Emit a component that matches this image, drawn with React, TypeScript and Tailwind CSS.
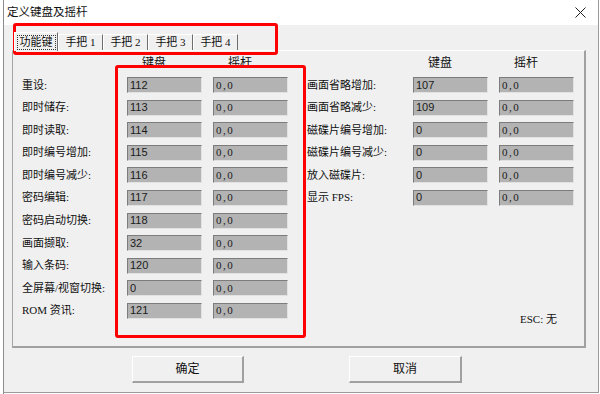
import React from "react";

type Row = { label: string; key: string; pad: string };

const LEFT_ROWS: Row[] = [
  { label: "重设:", key: "112", pad: "0,0" },
  { label: "即时储存:", key: "113", pad: "0,0" },
  { label: "即时读取:", key: "114", pad: "0,0" },
  { label: "即时编号增加:", key: "115", pad: "0,0" },
  { label: "即时编号减少:", key: "116", pad: "0,0" },
  { label: "密码编辑:", key: "117", pad: "0,0" },
  { label: "密码启动切换:", key: "118", pad: "0,0" },
  { label: "画面撷取:", key: "32", pad: "0,0" },
  { label: "输入条码:", key: "120", pad: "0,0" },
  { label: "全屏幕/视窗切换:", key: "0", pad: "0,0" },
  { label: "ROM 资讯:", key: "121", pad: "0,0" },
];

const RIGHT_ROWS: Row[] = [
  { label: "画面省略增加:", key: "107", pad: "0,0" },
  { label: "画面省略减少:", key: "109", pad: "0,0" },
  { label: "磁碟片编号增加:", key: "0", pad: "0,0" },
  { label: "磁碟片编号减少:", key: "0", pad: "0,0" },
  { label: "放入磁碟片:", key: "0", pad: "0,0" },
  { label: "显示 FPS:", key: "0", pad: "0,0" },
];

const TABS = ["功能键", "手把 1", "手把 2", "手把 3", "手把 4"];

function Field({ value, mono }: { value: string; mono?: boolean }) {
  return (
    <div
      className={`flex h-[16px] w-[75px] items-center border border-t-[#7c7c7c] border-l-[#7c7c7c] border-r-[#e2e2e2] border-b-[#e2e2e2] bg-[#b3b3b3] pl-[2px] text-[11px] leading-none text-[#1a1a1a] ${
        mono ? "font-['Liberation_Serif',serif] tracking-[1.5px]" : "font-['Liberation_Sans',sans-serif]"
      }`}
    >
      {value}
    </div>
  );
}

function Half({ rows, labelWidth, esc }: { rows: Row[]; labelWidth: string; esc?: boolean }) {
  return (
    <div className="flex h-[270px] flex-col">
      <div className="flex h-[14px] items-center text-[12px] leading-none">
        <div className={labelWidth} />
        <div className="w-[75px] pl-[15px]">键盘</div>
        <div className="w-[11px]" />
        <div className="w-[75px] pl-[15px]">摇杆</div>
      </div>
      <div className="mt-[7px] flex flex-col">
        {rows.map((row) => (
          <div key={row.label} className="flex h-[22.6px] items-start">
            <div className={`flex h-[16px] items-center text-[11px] leading-none ${labelWidth}`}>{row.label}</div>
            <Field value={row.key} />
            <div className="w-[11px]" />
            <Field value={row.pad} mono />
          </div>
        ))}
      </div>
      {esc && (
        <div className="mt-auto flex justify-end pr-[17px] text-[11px] leading-[14px]">ESC: 无</div>
      )}
    </div>
  );
}

export default function App() {
  return (
    <div className="relative flex h-[394px] w-[600px] overflow-hidden bg-white font-['Liberation_Serif','Noto_Sans_CJK_SC',serif] text-[#111]">
      <div className="h-full w-[4px] border-r border-[#8c8c8c] bg-white" />

      <div className="flex h-[393px] w-[595px] flex-col border-r border-b border-[#9a9a9a] bg-[#f0f0f0]">
        <div className="flex h-[25px] items-center justify-between bg-white pl-[3px] pr-[7px]">
          <span className="text-[11.5px] leading-none">定义键盘及摇杆</span>
          <svg width="11" height="11" viewBox="0 0 11 11" className="mr-[5px]">
            <path d="M0.5 0.5 L10.5 10.5 M10.5 0.5 L0.5 10.5" stroke="#222" strokeWidth="1" />
          </svg>
        </div>

        <div className="ml-[10px] mt-[7px] flex h-[18px] items-end">
          {TABS.map((tab, i) =>
            i === 0 ? (
              <div
                key={tab}
                className="relative z-10 -mb-[1px] flex h-[19px] w-[44px] items-center justify-center border-t border-l border-white border-r border-r-[#6e6e6e] bg-[#f0f0f0] text-[11px] leading-none"
              >
                <span className="border border-dotted border-[#333] px-[2px] py-[1px]">{tab}</span>
              </div>
            ) : (
              <div
                key={tab}
                className="flex h-[16px] w-[45px] items-center justify-center border-t border-l border-white border-r border-r-[#6e6e6e] text-[11px] leading-none"
              >
                {tab}
              </div>
            )
          )}
        </div>

        <div className="ml-[8px] flex h-[298px] w-[574px] border border-t-white border-l-[#a6a6a6] border-r-2 border-b-2 border-r-[#a0a0a0] border-b-[#a0a0a0] pl-[9px] pt-[5px]">
          <Half rows={LEFT_ROWS} labelWidth="w-[105px]" />
          <div className="w-[19px]" />
          <Half rows={RIGHT_ROWS} labelWidth="w-[106px]" esc />
        </div>

        <div className="mt-[8px] flex">
          <button
            type="button"
            className="ml-[128px] h-[27px] w-[112px] border border-t-white border-l-white border-r-2 border-b-2 border-r-[#a0a0a0] border-b-[#a0a0a0] bg-[#f0f0f0] text-[12px]"
          >
            确定
          </button>
          <button
            type="button"
            className="ml-[105px] h-[27px] w-[113px] border border-t-white border-l-white border-r-2 border-b-2 border-r-[#a0a0a0] border-b-[#a0a0a0] bg-[#f0f0f0] text-[12px]"
          >
            取消
          </button>
        </div>
      </div>

      <div className="pointer-events-none absolute left-[13px] top-[23px] h-[32px] w-[265px] rounded-[3px] border-[3px] border-[#ff0000]" />
      <div className="pointer-events-none absolute left-[115px] top-[65px] h-[273px] w-[191px] rounded-[3px] border-[3px] border-[#ff0000]" />
    </div>
  );
}
